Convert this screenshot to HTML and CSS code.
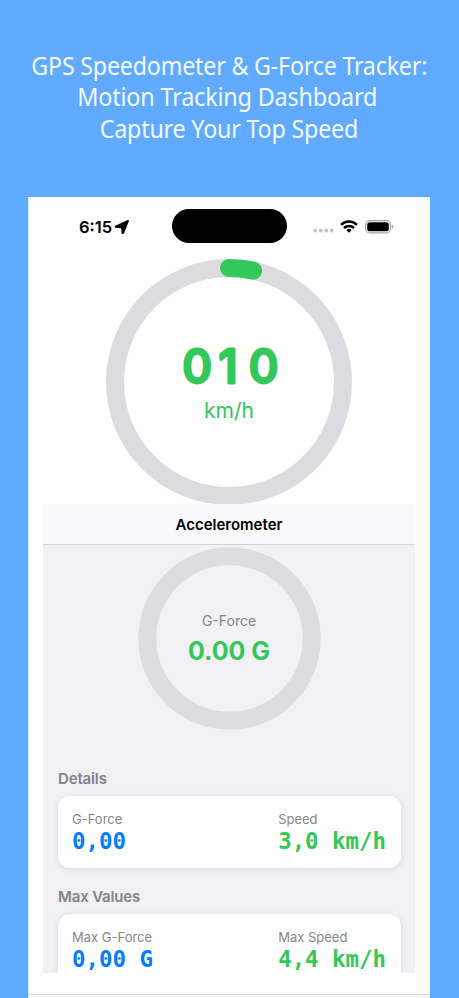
FILE: index.html
```html
<!DOCTYPE html>
<html lang="en">
<head>
<meta charset="utf-8">
<title>GPS Speedometer</title>
<link rel="stylesheet" href="styles.css">
</head>
<body>
<main class="promo">
  <h1 class="headline">
    <span class="line line-a">GPS Speedometer &amp; G-Force Tracker:</span>
    <span class="line line-b">Motion Tracking Dashboard</span>
    <span class="line line-c">Capture Your Top Speed</span>
  </h1>
  <section class="phone">
    <header class="status">
      <div class="clock">
        <span>6:15</span>
        <svg class="arrow" viewBox="0 0 13 13"><path d="M12.2 .8 7.7 12Q7.2 12.7 6.8 12L6.5 6.9 1 6.7Q.2 6.3 1 5.8Z" fill="#000" stroke="#000" stroke-width="1.5" stroke-linejoin="round"/></svg>
      </div>
      <div class="island"></div>
      <div class="signals">
        <svg class="dots" viewBox="0 0 21 5" fill="#c5c5c7"><circle cx="2.2" cy="2.5" r="1.9"/><circle cx="7.7" cy="2.5" r="1.9"/><circle cx="13.2" cy="2.5" r="1.9"/><circle cx="18.7" cy="2.5" r="1.9"/></svg>
        <svg class="wifi" viewBox="0 0 18 13" fill="none" stroke="#000" stroke-width="2.5"><path d="M1.1 4.8a11.3 11.3 0 0 1 15.8 0"/><path d="M4 8a7.2 7.2 0 0 1 10 0"/><path d="M9 12.8 6.4 10.2a3.6 3.6 0 0 1 5.2 0Z" fill="#000" stroke="none"/></svg>
        <svg class="battery" viewBox="0 0 29 14"><rect x=".6" y=".6" width="24.8" height="12.3" rx="4" fill="none" stroke="#a3a3a3" stroke-width="1.1"/><rect x="2.2" y="2.2" width="21.6" height="9.1" rx="2.6"/><path d="M26.7 4.6q1.7.8 1.7 2.2t-1.7 2.2Z" fill="#a3a3a3"/></svg>
      </div>
    </header>
    <div class="speed">
      <svg class="ring" viewBox="0 0 246 246" fill="none" stroke-width="18"><circle cx="123" cy="123" r="114" stroke="#dcdce0"/><path d="M123 9A114 114 0 0 1 147.1 11.6" stroke="#34c759" stroke-linecap="round"/></svg>
      <div class="readout">
        <svg class="digits" viewBox="0 0 110 60"><text class="digits-text" x="23 54 89.5" y="48.3" text-anchor="middle">010</text></svg>
        <span class="unit">km/h</span>
      </div>
    </div>
    <section class="panel">
      <h2 class="title">Accelerometer</h2>
      <div class="force">
        <svg class="ring" viewBox="0 0 183 183" fill="none"><circle cx="91.5" cy="91.5" r="82.2" stroke="#dcdce1" stroke-width="18"/></svg>
        <div class="readout">
          <span class="force-label">G-Force</span>
          <span class="force-value">0.00 G</span>
        </div>
      </div>
      <h3 class="group">Details</h3>
      <div class="card">
        <div class="metric"><span class="name">G-Force</span><span class="value blue">0,00</span></div>
        <div class="metric"><span class="name">Speed</span><span class="value green">3,0 km/h</span></div>
      </div>
      <h3 class="group">Max Values</h3>
      <div class="card">
        <div class="metric"><span class="name">Max G-Force</span><span class="value blue">0,00 G</span></div>
        <div class="metric"><span class="name">Max Speed</span><span class="value green">4,4 km/h</span></div>
      </div>
    </section>
    <div class="tabbar"></div>
  </section>
</main>
</body>
</html>
```
FILE: styles.css
```css
* { box-sizing: border-box; }
body { margin: 0; background: #60abff; font-family: Inter, "Liberation Sans", sans-serif; color: #000; }
.promo { height: 998px; overflow: hidden; display: flex; flex-direction: column; align-items: center; }
.headline { margin: 0; padding-top: 50px; height: 197px; font: 400 25px/31.3px "Noto Sans", sans-serif; color: #f3f9ff; display: flex; flex-direction: column; align-items: center; flex: none; }
.line { white-space: nowrap; letter-spacing: -.2px; }
.line-a { transform: scaleX(.928); }
.line-b { transform: scaleX(.936); margin-right: 5px; }
.line-c { transform: scaleX(.93); margin-right: 1px; }
.phone { width: 402px; height: 801px; margin-left: 28px; align-self: flex-start; padding-right: 1px; background: #fefefe; border-left: 1px solid #dcecff; display: flex; flex-direction: column; align-items: center; flex: none; }
.status { width: 100%; height: 62px; padding: 12px 35px 0 50px; display: grid; grid-template-columns: 93px 115px 1fr; }
.clock { display: flex; gap: 3px; font-weight: 600; font-size: 16.5px; line-height: 36px; }
.arrow { width: 14px; height: 14px; margin-top: 11px; flex: none; }
.island { height: 34px; border-radius: 17px; background: #000; }
.signals { display: flex; height: 35px; justify-content: flex-end; align-items: center; }
.dots { width: 21px; height: 5px; margin: 8px 6px 0 0; }
.wifi { width: 18px; height: 13px; margin-right: 7px; }
.battery { width: 29px; height: 14px; }
.speed { display: grid; width: 246px; height: 245px; flex: none; }
.speed > *, .force > * { grid-area: 1 / 1; }
.speed .ring { width: 246px; height: 246px; }
.readout { display: flex; flex-direction: column; align-items: center; }
.speed .readout { padding-top: 76px; }
.digits { width: 110px; height: 60px; }
.digits-text { font: 500 46px Inter, sans-serif; fill: #34c759; stroke: #34c759; stroke-width: 2.8px; stroke-linejoin: round; }
.unit { font: 400 21px/28px Inter, sans-serif; color: #34c759; margin-top: 2px; }
.panel { width: 372px; height: 469px; background: #f0f0f5; overflow: hidden; flex: none; }
.title { margin: 0; height: 41px; background: #fafafc; border-bottom: 1px solid #d3d3d8; font-size: 15px; font-weight: 600; line-height: 41px; text-align: center; }
.force { display: grid; width: 183px; height: 183px; margin: 2px auto 0; }
.force .readout { padding-top: 63px; }
.force-label { font-size: 14px; line-height: 22px; color: #85858a; }
.force-value { font-size: 25px; font-weight: 700; line-height: 39px; color: #34c759; }
.group { margin: 0 15px; font-size: 15px; font-weight: 600; line-height: 20px; letter-spacing: -.15px; color: #828287; }
.force + .group { margin-top: 39px; }
.card { margin: 7px 14px 19px 15px; height: 72px; border-radius: 12px; background: #fff; box-shadow: 0 1px 6px rgba(0,0,0,.1); padding: 14px 15px 0 14px; display: flex; justify-content: space-between; }
.metric { display: flex; flex-direction: column; }
.name { font-size: 13px; line-height: 18px; color: #85858a; }
.value { font: 700 22.4px/26px "DejaVu Sans Mono", monospace; white-space: pre; }
.blue { color: #047cff; }
.green { color: #34c759; }
.tabbar { width: 401px; align-self: flex-start; margin-top: auto; height: 4px; background: #f8f8f8; border-top: 1px solid #dadada; flex: none; }
```
